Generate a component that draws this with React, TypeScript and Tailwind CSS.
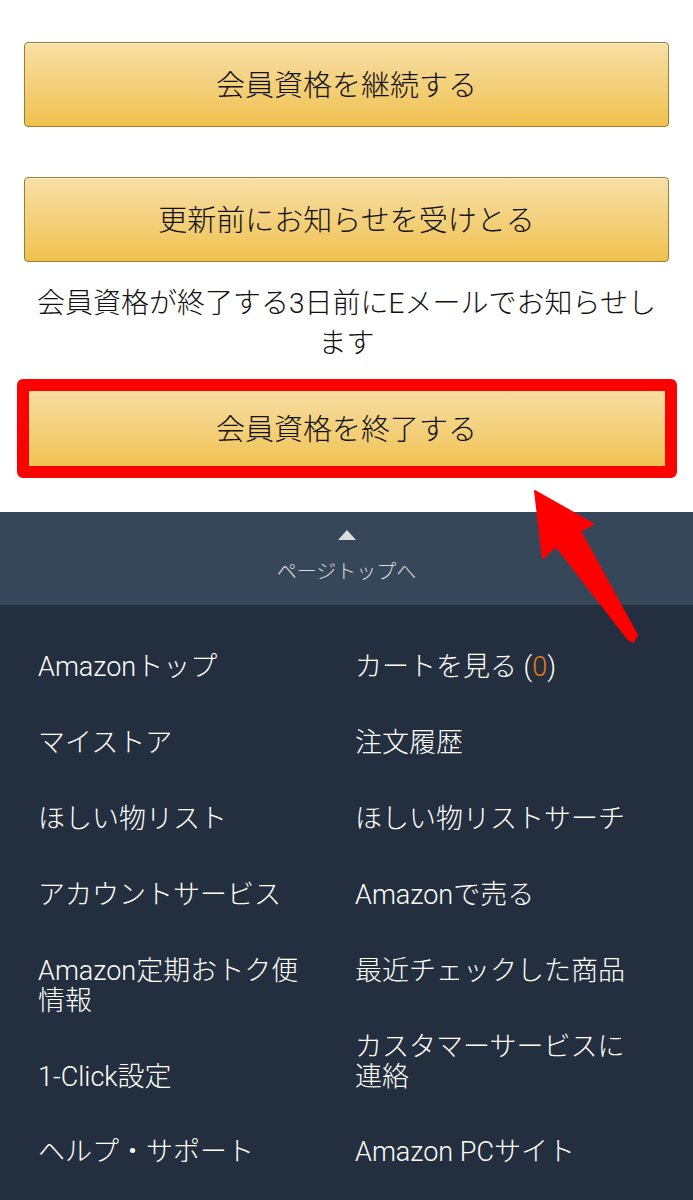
import React from 'react';

type LinkRow = {
    left: React.ReactNode;
    right: React.ReactNode;
    h: string;
    leftPad?: string;
};

function GoldButton({ label }: { label: string }) {
    return (
        <button className="w-full h-[85px] rounded-[4px] border-[1.5px] border-[#9c7e31] bg-gradient-to-b from-[#f7dfa5] to-[#f0c14b] pt-[2px] text-[29px] leading-[40px] font-light text-[#111111] shadow-[inset_0_1px_0_rgba(255,255,255,0.5)]">
            {label}
        </button>
    );
}

const rows: LinkRow[] = [
    {
        left: 'Amazonトップ',
        right: (
            <>
                カートを見る (<span className="text-[#e47911]">0</span>)
            </>
        ),
        h: 'h-[76px]',
    },
    { left: 'マイストア', right: '注文履歴', h: 'h-[76px]' },
    { left: 'ほしい物リスト', right: 'ほしい物リストサーチ', h: 'h-[76px]' },
    { left: 'アカウントサービス', right: 'Amazonで売る', h: 'h-[76px]' },
    {
        left: (
            <>
                <span className="block whitespace-nowrap">Amazon定期おトク便</span>
                <span className="block">情報</span>
            </>
        ),
        right: '最近チェックした商品',
        h: 'h-[76px]',
    },
    {
        left: '1-Click設定',
        leftPad: 'pt-[30px]',
        right: (
            <>
                <span className="block whitespace-nowrap">カスタマーサービスに</span>
                <span className="block">連絡</span>
            </>
        ),
        h: 'h-[105px]',
    },
    { left: 'ヘルプ・サポート', right: 'Amazon PCサイト', h: 'h-[76px]' },
];

export default function App() {
    return (
        <div
            className="relative w-[693px] h-[1200px] overflow-hidden bg-white"
            style={{ fontFamily: 'Roboto, "Noto Sans CJK JP", sans-serif' }}
        >
            {/* Membership actions */}
            <div className="px-[24px] pt-[42px]">
                <GoldButton label="会員資格を継続する" />
                <div className="mt-[50px]">
                    <GoldButton label="更新前にお知らせを受けとる" />
                </div>
                <p className="mt-[22px] text-center text-[28px] leading-[40px] font-light text-[#111111]">
                    <span className="block whitespace-nowrap">会員資格が終了する3日前にEメールでお知らせし</span>
                    <span className="block">ます</span>
                </p>
                <div className="relative mt-[22px]">
                    <GoldButton label="会員資格を終了する" />
                    {/* Highlight frame */}
                    <div className="absolute -top-[7px] -left-[7px] -right-[8px] -bottom-[7px] rounded-[6px] border-[12px] border-[#ff0000] pointer-events-none" />
                </div>
            </div>

            {/* Footer */}
            <footer className="mt-[41px]">
                <div className="h-[93px] bg-[#37475a] flex flex-col items-center pt-[18px]">
                    <svg width="18" height="10" viewBox="0 0 18 10">
                        <polygon points="9,0 18,10 0,10" fill="#dddddd" />
                    </svg>
                    <span className="mt-[17px] text-[20px] leading-[30px] font-light text-[#dddddd]">ページトップへ</span>
                </div>
                <div className="bg-[#232f3e] h-[595px] pt-[47px] pl-[38px] text-[27px] leading-[30px] font-light text-white">
                    {rows.map((row, i) => (
                        <div key={i} className={`flex items-start ${row.h}`}>
                            <div className={`w-[317px] ${row.leftPad ?? ''}`}>{row.left}</div>
                            <div className="flex-1 whitespace-nowrap">{row.right}</div>
                        </div>
                    ))}
                </div>
            </footer>

            {/* Red pointer arrow */}
            <svg className="absolute left-0 top-0 pointer-events-none" width="693" height="1200" viewBox="0 0 693 1200">
                <polygon
                    points="535,491 593,524 580,531 637,635 633,642 628,639 556,546 543,558"
                    fill="#ff0000"
                    strokeLinejoin="round"
                    stroke="#ff0000"
                    strokeWidth="2"
                />
            </svg>
        </div>
    );
}
